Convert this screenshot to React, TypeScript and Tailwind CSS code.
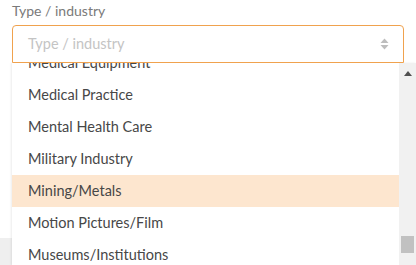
import React from "react";

const items = [
  "Medical Equipment",
  "Medical Practice",
  "Mental Health Care",
  "Military Industry",
  "Mining/Metals",
  "Motion Pictures/Film",
  "Museums/Institutions",
];

export default function App() {
  return (
    <div
      className="relative h-[265px] w-[416px] overflow-hidden bg-white"
      style={{ fontFamily: "Lato, 'Noto Sans', sans-serif" }}
    >
      <div className="absolute bottom-0 left-0 h-[27px] w-[12px] bg-[#efefef]" />
      <div className="px-3 pt-[3px]">
        <div className="h-[22px] text-[14px] leading-[16px] text-[#7a7a7a]">Type / industry</div>
        <div className="relative z-10 flex h-[38px] items-center justify-between rounded-t-[4px] border border-[#f0a24e] bg-white pl-[15px] pr-[14px]">
          <span className="text-[14.5px] text-[#c4c4c4]">Type / industry</span>
          <svg width="9" height="12" viewBox="0 0 9 12" className="text-[#bdbdbd]">
            <path d="M4.5 0.5 L8.5 5 H0.5 Z" fill="currentColor" />
            <path d="M4.5 11.5 L8.5 7 H0.5 Z" fill="currentColor" />
          </svg>
        </div>
      </div>

      <div className="absolute left-[12px] right-0 top-[63px] bottom-0 overflow-hidden bg-white shadow-[-1px_0_2px_rgba(0,0,0,0.08)]">
        <ul className="-mt-4 mr-[17px]">
          {items.map((it) => (
            <li
              key={it}
              className={`flex h-8 items-center pl-4 text-[14.5px] text-[#474747] ${
                it === "Mining/Metals" ? "bg-[#fde6cf]" : ""
              }`}
            >
              {it}
            </li>
          ))}
        </ul>
        <div className="absolute right-0 top-0 bottom-0 flex w-[17px] flex-col items-center bg-[#f1f1f1]">
          <svg width="8" height="5" viewBox="0 0 8 5" className="mt-[8px] text-[#505050]">
            <path d="M4 0 L8 5 H0 Z" fill="currentColor" />
          </svg>
          <div className="mt-[160px] h-[17px] w-[13px] bg-[#c1c1c1]" />
        </div>
      </div>
    </div>
  );
}
